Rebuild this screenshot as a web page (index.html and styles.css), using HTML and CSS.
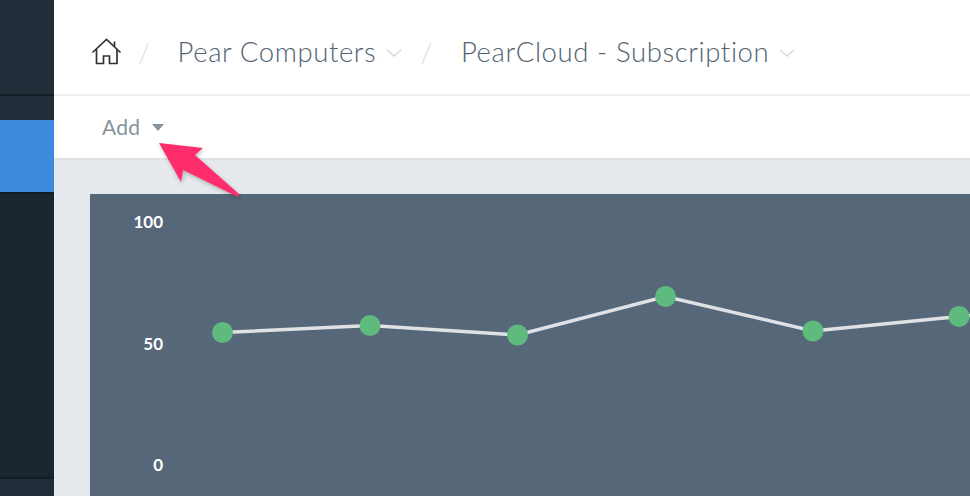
FILE: index.html
```html
<!DOCTYPE html>
<html>
<head>
  <title>PearCloud - Subscription</title>
  <meta name='viewport' content='width=device-width, initial-scale=1'>
  <link rel="stylesheet" href="styles.css">
</head>
<body>
  <div class='app'>
    <div class='sidebar'>
      <div class='side-top'></div>
      <div class='side-gap'></div>
      <div class='side-active'></div>
      <div class='side-list'></div>
      <div class='side-bottom'></div>
    </div>
    <div class='main'>
      <div class='breadcrumb'>
        <svg class='home' width='32' height='28' viewBox='0 0 32 28'>
          <path d='M1.5 14.5 L15.5 1.5 L29.5 14.5 M23.5 3.5 V8.5 M5.5 11 V25.5 H12.5 V18 H18.5 V25.5 H26 V11' fill='none' stroke='#333' stroke-width='1.7'/>
        </svg>
        <span class='sep'>/</span>
        <span class='crumb'>Pear Computers</span>
        <svg class='chevron' width='16' height='8' viewBox='0 0 16 8'><path d='M1 1 L8 7 L15 1' fill='none' stroke='#d5d8db' stroke-width='1.5'/></svg>
        <span class='sep sep-second'>/</span>
        <span class='crumb'>PearCloud - Subscription</span>
        <svg class='chevron' width='16' height='8' viewBox='0 0 16 8'><path d='M1 1 L8 7 L15 1' fill='none' stroke='#d5d8db' stroke-width='1.5'/></svg>
      </div>
      <div class='toolbar'>
        <span class='add'>Add</span>
        <span class='caret'></span>
      </div>
      <div class='content'>
        <div class='chart'>
          <div class='axis'>
            <span>100</span>
            <span>50</span>
            <span>0</span>
          </div>
          <svg class='plot' width='880' height='302' viewBox='90 194 880 302'>
            <polyline points='222.500,332.500 370,325.500 517.500,335 665.500,296.500 813,331 959,316.500 990,313.500' fill='none' stroke='#dfe1e5' stroke-width='3.500'/>
            <g fill='#5fba7d'>
              <circle cx='222.500' cy='332.500' r='10.500'/>
              <circle cx='370' cy='325.500' r='10.500'/>
              <circle cx='517.500' cy='335' r='10.500'/>
              <circle cx='665.500' cy='296.500' r='10.500'/>
              <circle cx='813' cy='331' r='10.500'/>
              <circle cx='959' cy='316.500' r='10.500'/>
            </g>
          </svg>
        </div>
      </div>
    </div>
  </div>
  <svg class='arrow' width='90' height='64' viewBox='0 0 90 64'>
    <path d='M1 1 L45 6 L37 13 L81 52 L80 55 L25 28 L23 40 Z' fill='#ff2d6b'/>
  </svg>
</body>
</html>
```

FILE: styles.css
```css
html, body {
  margin: 0;
  height: 100%;
  overflow: hidden;
}
body {
  font-family: Lato, Arial, sans-serif;
  background-color: white;
  position: relative;
}
.app {
  display: flex;
  height: 496px;
}
.sidebar {
  width: 54px;
  flex-shrink: 0;
  display: flex;
  flex-direction: column;
  background-color: #212d38;
}
.side-top {
  height: 94px;
  border-bottom: 2px solid #141c23;
}
.side-gap {
  height: 24px;
}
.side-active {
  height: 72px;
  background-color: #3b8adb;
}
.side-list {
  height: 283px;
  background-color: #1b252e;
  border-top: 2px solid #141c23;
  border-bottom: 2px solid #141c23;
}
.side-bottom {
  flex: 1;
}
.main {
  flex: 1;
  min-width: 0;
  display: flex;
  flex-direction: column;
}
.breadcrumb {
  height: 84px;
  padding: 10px 0 0 38px;
  border-bottom: 2px solid #eceef0;
  display: flex;
  align-items: center;
  color: #526272;
  font-size: 27.5px;
  font-weight: 300;
  letter-spacing: 0.6px;
  white-space: nowrap;
}
.home {
  margin: -1px 0 0 -1px;
}
.crumb {
  margin-top: -2px;
}
.sep {
  color: #dcdee0;
  margin: 0 27px 0 15px;
}
.sep-second {
  margin: 0 28px 0 18px;
}
.chevron {
  margin: 2px 0 0 10px;
}
.toolbar {
  height: 60px;
  padding: 0 0 2px 48px;
  border-bottom: 2px solid #dfe2e6;
  display: flex;
  align-items: center;
}
.add {
  color: #85929c;
  font-size: 21px;
  letter-spacing: 0.2px;
}
.caret {
  width: 0;
  height: 0;
  margin: 2px 0 0 12px;
  border-left: 6px solid transparent;
  border-right: 6px solid transparent;
  border-top: 7px solid #87939d;
}
.content {
  flex: 1;
  background-color: #e6e9ee;
  padding: 34px 0 0 36px;
  overflow: hidden;
}
.chart {
  position: relative;
  height: 302px;
  background-color: #566779;
}
.axis {
  position: absolute;
  top: 17px;
  left: 0;
  width: 73px;
  height: 264px;
  display: flex;
  flex-direction: column;
  justify-content: space-between;
  text-align: right;
  color: white;
  font-size: 17px;
  font-weight: bold;
}
.plot {
  display: block;
}
.arrow {
  position: absolute;
  left: 158px;
  top: 142px;
  filter: drop-shadow(1px 2px 2px rgba(0,0,0,0.25));
}
```
